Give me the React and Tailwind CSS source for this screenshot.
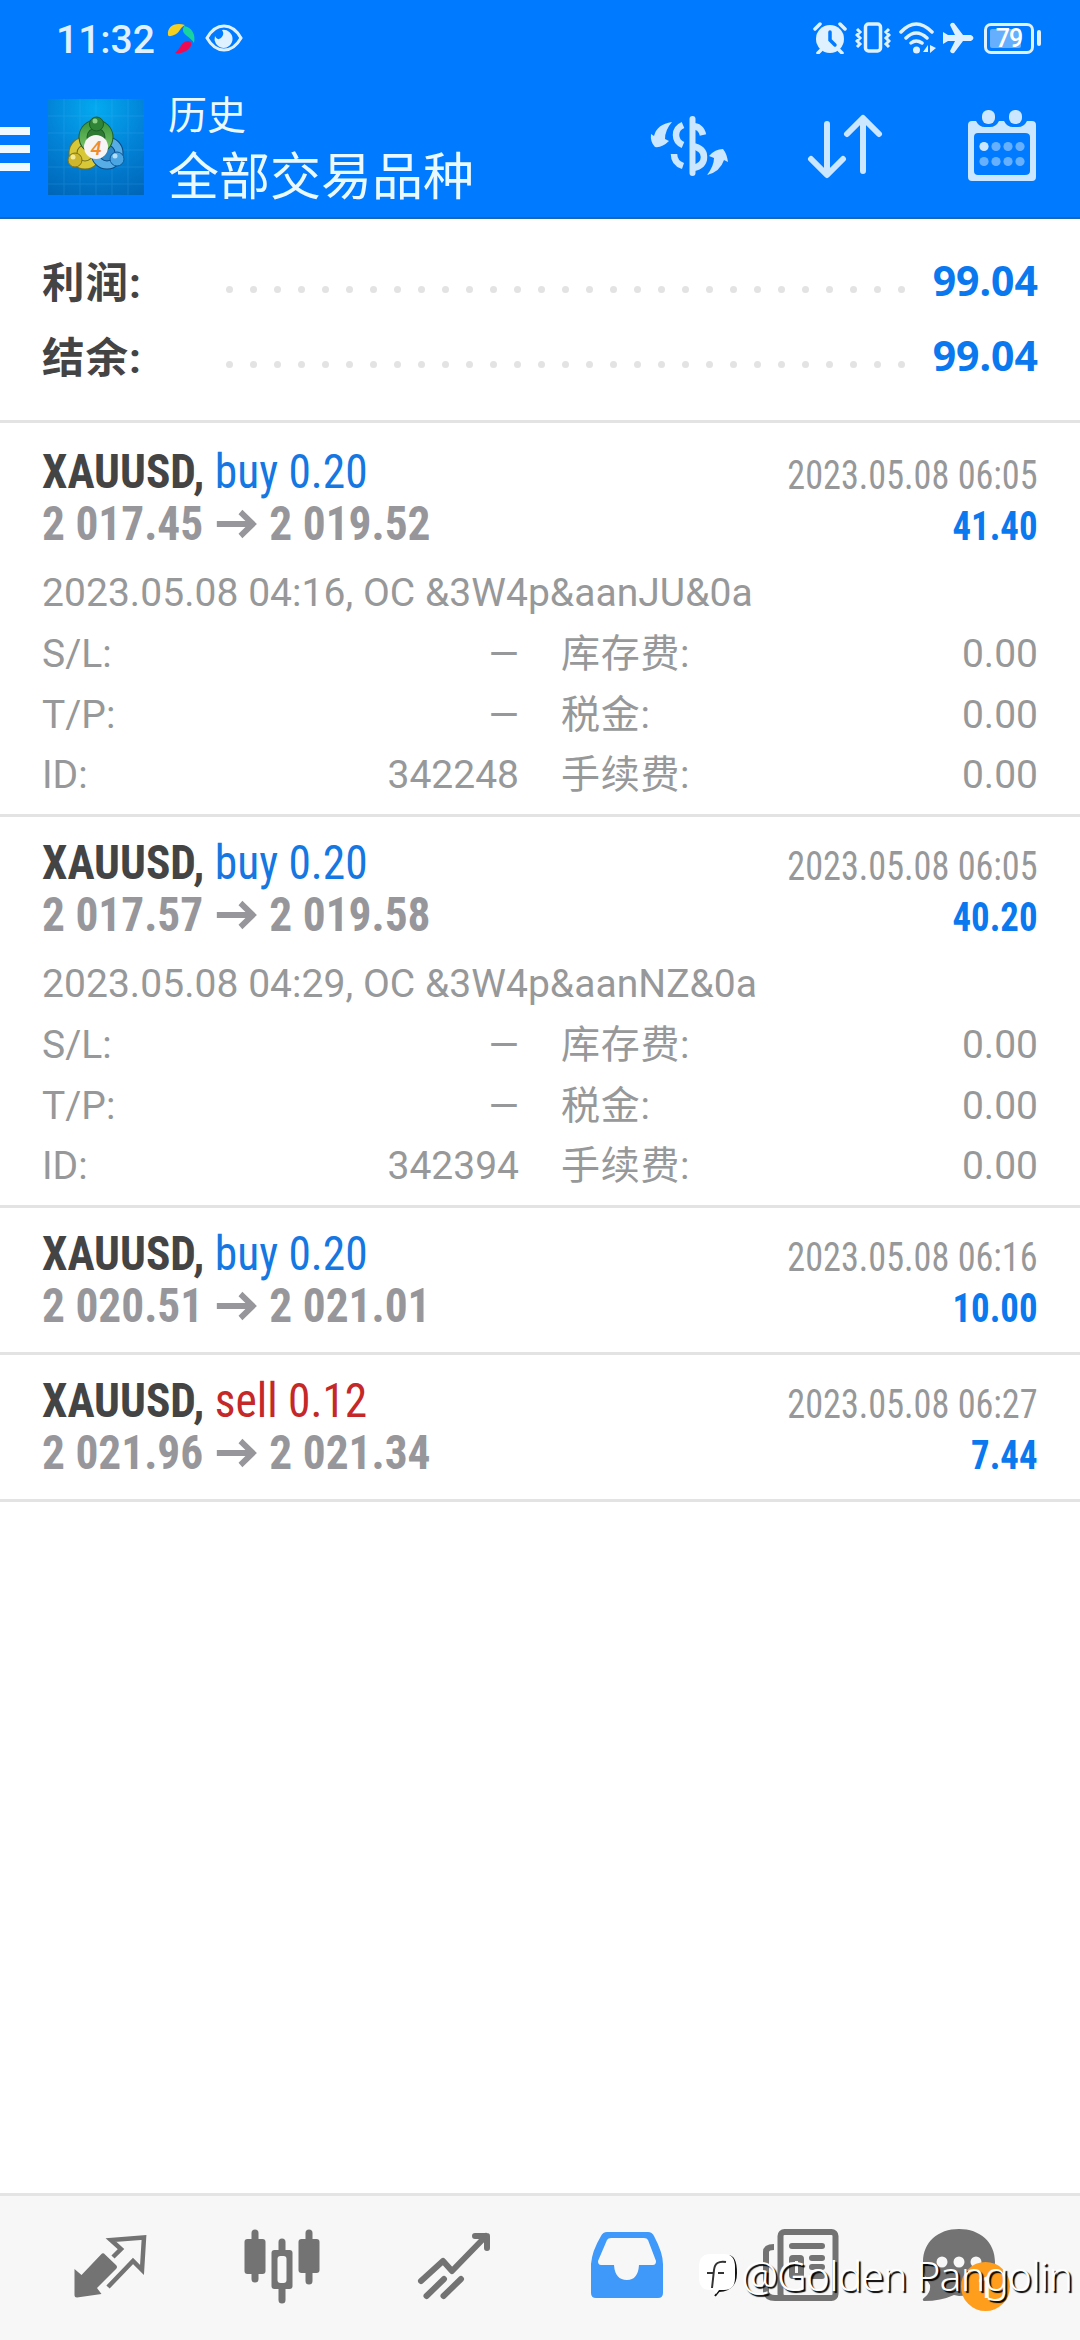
import clsx from 'clsx';

const SUMMARY = [
  { label: '利润:', value: '99.04' },
  { label: '结余:', value: '99.04' },
];

const DEALS = [
  {
    id: '342248',
    symbol: 'XAUUSD',
    side: 'buy',
    volume: '0.20',
    open: '2 017.45',
    close: '2 019.52',
    time: '2023.05.08 06:05',
    profit: '41.40',
    comment: '2023.05.08 04:16, OC &3W4p&aanJU&0a',
  },
  {
    id: '342394',
    symbol: 'XAUUSD',
    side: 'buy',
    volume: '0.20',
    open: '2 017.57',
    close: '2 019.58',
    time: '2023.05.08 06:05',
    profit: '40.20',
    comment: '2023.05.08 04:29, OC &3W4p&aanNZ&0a',
  },
  {
    symbol: 'XAUUSD',
    side: 'buy',
    volume: '0.20',
    open: '2 020.51',
    close: '2 021.01',
    time: '2023.05.08 06:16',
    profit: '10.00',
  },
  {
    symbol: 'XAUUSD',
    side: 'sell',
    volume: '0.12',
    open: '2 021.96',
    close: '2 021.34',
    time: '2023.05.08 06:27',
    profit: '7.44',
  },
];

function StatusBar() {
  return (
    <div className="flex h-[76px] items-center justify-between pl-[56px] pr-[39px] text-[#dff1ff]">
      <div className="flex items-center">
        <span className="w-[110px] pt-1 text-[39px] font-medium leading-none">11:32</span>
        <svg className="h-[32px] w-[30px]" viewBox="0 0 30 32">
          <path d="M2 13 C1 5 8 0 19 3 C14 5 13 12 8 13 C5 14 3 15 2 13Z" fill="#f5d020" />
          <path d="M18 4 C26 5 30 13 28 21 C25 15 16 13 17 7Z" fill="#17d3a0" />
          <path d="M9 31 C14 28 15 19 22 19 C28 20 25 26 20 29 C16 31 12 32 9 31Z" fill="#ee0a52" />
        </svg>
        <svg className="ml-[9px] h-[28px] w-[38px]" viewBox="0 0 38 28">
          <path d="M2 14 C11 -2 27 -2 36 14 C27 30 11 30 2 14Z" fill="none" stroke="currentColor" strokeWidth="3" />
          <path d="M17 6 A9 9 0 1 1 10 12 Q12 17 16 14 Q20 10 17 6Z" fill="currentColor" />
        </svg>
      </div>
      <div className="flex items-center">
        {/* alarm */}
        <svg className="h-[32px] w-[34px]" viewBox="0 0 34 32">
          <path d="M8 28 L5 31 M26 28 L29 31 M2 7 L7 2 M27 2 L32 7" stroke="currentColor" strokeWidth="3.5" strokeLinecap="round" />
          <circle cx="17" cy="17" r="14" fill="currentColor" />
          <path d="M17 10 V18 L22 23" fill="none" stroke="#007aff" strokeWidth="3.5" strokeLinecap="round" />
        </svg>
        {/* vibrate */}
        <svg className="ml-[8px] h-[32px] w-[36px]" viewBox="0 0 36 32">
          <rect x="10.500" y="2" width="15" height="27" rx="3" fill="none" stroke="currentColor" strokeWidth="3.5" />
          <path d="M2 7 L5 10 L2 13 L5 16 L2 19 L5 22 L2 25 M34 7 L31 10 L34 13 L31 16 L34 19 L31 22 L34 25" fill="none" stroke="currentColor" strokeWidth="3" />
        </svg>
        {/* wifi */}
        <svg className="ml-[8px] h-[32px] w-[37px]" viewBox="0 0 37 32">
          <path d="M2 10 Q17 -6 33 10 M7 16 Q17 6 28 16 M12 21 Q17 17 23 21" fill="none" stroke="currentColor" strokeWidth="3.5" strokeLinecap="round" />
          <circle cx="17.500" cy="28" r="3.500" fill="currentColor" />
          <path d="M29 23 V30 H24Z M31 23 L37 26 L31 31Z" fill="currentColor" />
        </svg>
        {/* airplane */}
        <svg className="ml-[6px] h-[32px] w-[32px]" viewBox="0 0 32 32">
          <path d="M1 10 L6 13 H13 L8 3 Q9 0 12 1 L21 13 H29 Q34 16 29 19 H21 L12 31 Q9 32 8 29 L13 19 H6 L1 22Z" fill="currentColor" />
        </svg>
        {/* battery */}
        <div className="ml-[10px] flex items-center gap-[3px]">
          <div className="relative flex h-[31px] w-[50px] items-center justify-center rounded-[7px] border-[3px] border-current">
            <div className="absolute left-[3px] top-[3px] h-[19px] w-[31px] rounded-[2px] bg-white/40" />
            <span className="relative text-[25px] font-medium leading-none tracking-[-1px] text-white">79</span>
          </div>
          <div className="h-[16px] w-[4px] rounded-full bg-current" />
        </div>
      </div>
    </div>
  );
}

function Logo() {
  return (
    <svg className="ml-[18px] h-24 w-24" viewBox="0 0 96 96">
      <defs>
        <radialGradient id="tile" cx="0.5" cy="0.1" r="1">
          <stop offset="0" stopColor="#04aaf0" />
          <stop offset="0.5" stopColor="#0284d8" />
          <stop offset="1" stopColor="#0066b8" />
        </radialGradient>
        <linearGradient id="green" x1="0" y1="0" x2="0" y2="1">
          <stop offset="0" stopColor="#3f9a3f" />
          <stop offset="1" stopColor="#7cc46a" />
        </linearGradient>
      </defs>
      <rect width="96" height="96" fill="url(#tile)" />
      <path
        d="M0 17H96M0 34H96M0 51H96M0 68H96M0 85H96M16 0V96M32 0V96M48 0V96M64 0V96M80 0V96"
        stroke="#5cc4f5"
        strokeWidth="1"
        opacity="0.18"
      />
      <circle cx="37" cy="54" r="12" fill="#d8c838" stroke="#75701c" strokeWidth="9" />
      <circle cx="37" cy="54" r="12" fill="none" stroke="#d8c838" strokeWidth="7" />
      <circle cx="59" cy="54" r="12" fill="#2d86c8" stroke="#0a4a86" strokeWidth="9" />
      <circle cx="59" cy="54" r="12" fill="none" stroke="#57aee6" strokeWidth="7" />
      <circle cx="48" cy="38" r="13" fill="#2f7a33" stroke="#1d5c2c" strokeWidth="9" />
      <circle cx="48" cy="38" r="13" fill="none" stroke="url(#green)" strokeWidth="7" />
      <circle cx="48.500" cy="25" r="7" fill="#2f8436" stroke="#1d5c2c" strokeWidth="1" />
      <circle cx="27" cy="61" r="7" fill="#cdb52c" stroke="#807518" strokeWidth="1" />
      <circle cx="69" cy="60" r="7" fill="#4ba5e2" stroke="#0f5a98" strokeWidth="1" />
      <circle cx="47" cy="22" r="2.500" fill="#8ccf88" />
      <circle cx="25" cy="58" r="2.500" fill="#f3ea98" />
      <circle cx="67" cy="57" r="2.500" fill="#b4defa" />
      <circle cx="48" cy="48" r="12" fill="#f6f4f4" />
      <text x="48" y="55.500" textAnchor="middle" fontSize="20" fontWeight="500" fontStyle="italic" fill="#f08c2c">
        4
      </text>
    </svg>
  );
}

function Header() {
  return (
    <header className="h-[219px] border-b-2 border-[#1766b8] bg-[#007aff]">
      <StatusBar />
      <div className="flex h-[141px] items-start">
        <button className="mt-[51px] flex w-[30px] flex-col gap-[10px]">
          <span className="h-2 w-full bg-[#eefaff]" />
          <span className="h-2 w-full bg-[#eefaff]" />
          <span className="h-2 w-full bg-[#eefaff]" />
        </button>
        <div className="mt-[23px]">
          <Logo />
        </div>
        <div className="ml-[24px] mt-[18px] text-[#e9f9ff]">
          <div className="text-[39px] leading-[44px]">历史</div>
          <div className="mt-[6px] text-[51px] leading-[68px]">全部交易品种</div>
        </div>
        <div className="ml-auto mr-[42px] mt-[30px] flex text-[#cbe6ff]">
          <svg className="h-[84px] w-[80px]" viewBox="0 0 80 84">
            <path d="M22 16 Q7 18 4 30 L1 28 Q0 36 5 41 Q12 42 19 35 L15 33 Q15 24 22 16Z" fill="currentColor" />
            <path d="M57 69 Q64 60 64 52 L59 50 Q65 43 73 43 Q77 48 78 56 L74 54 Q70 66 57 69Z" fill="currentColor" />
            <path d="M33 19 Q26 22 26 29 Q26 36 33 39 M24 48 Q24 57 33 60 M42 20 Q51 20 53 29 M42 40 Q54 42 54 51 Q54 60 43 62" fill="none" stroke="currentColor" strokeWidth="6.500" />
            <path d="M42.500 13 V67" stroke="currentColor" strokeWidth="6" strokeLinecap="round" />
          </svg>
          <svg className="ml-[77px] h-[84px] w-[76px]" viewBox="0 0 76 84" fill="none" stroke="currentColor" strokeWidth="6" strokeLinecap="round" strokeLinejoin="round">
            <path d="M20 18 V68 M4 53 L20 69 L36 53" />
            <path d="M56 65 V14 M40 28 L56 12 L72 28" />
          </svg>
          <svg className="ml-[83px] h-[84px] w-[72px]" viewBox="0 0 72 84">
            <path
              fillRule="evenodd"
              d="M6 15 H10 Q13 21 19 21 H24 Q30 21 33 15 H38 Q41 21 47 21 H52 Q58 21 61 15 H66 Q70 15 70 19 V71 Q70 75 66 75 H6 Q2 75 2 71 V19 Q2 15 6 15Z M12 27 Q8 27 8 31 V65 Q8 69 12 69 H59 Q64 69 64 65 V31 Q64 27 59 27Z"
              fill="currentColor"
            />
            <rect x="16" y="4" width="13" height="14" rx="6" fill="currentColor" />
            <rect x="43" y="4" width="13" height="14" rx="6" fill="currentColor" />
            <circle cx="18" cy="40.500" r="4.600" fill="currentColor" />
            <g fill="#66b0ff">
              <circle cx="30" cy="40.500" r="4.600" />
              <circle cx="42" cy="40.500" r="4.600" />
              <circle cx="54" cy="40.500" r="4.600" />
              <circle cx="18" cy="55.500" r="4.600" />
              <circle cx="30" cy="55.500" r="4.600" />
              <circle cx="42" cy="55.500" r="4.600" />
              <circle cx="54" cy="55.500" r="4.600" />
            </g>
          </svg>
        </div>
      </div>
    </header>
  );
}

function SummaryRow({ label, value }) {
  return (
    <div className="flex h-[75px] items-center">
      <span className="w-[184px] pt-[3px] text-[42.5px] font-bold tracking-[1px] text-[#444444]">{label}</span>
      <div className="mt-[14px] flex w-[679px] justify-between">
        {Array.from({ length: 29 }).map((_, i) => (
          <i key={i} className="size-[7px] rounded-full bg-[#e3e3e3]" />
        ))}
      </div>
      <span className="ml-auto pb-[3px] font-['Noto_Sans'] text-[41px] font-bold text-[#0a78ee]">{value}</span>
    </div>
  );
}

function DetailRow({ left, leftValue, right, rightValue }) {
  return (
    <div className="flex">
      <span>{left}</span>
      <span className="ml-auto">{leftValue}</span>
      <div className="ml-[42px] flex w-[477px] justify-between">
        <span className="tracking-[0.7px]">{right}</span>
        <span>{rightValue}</span>
      </div>
    </div>
  );
}

function Deal({ deal }) {
  return (
    <div
      className={clsx(
        'border-b-[3px] border-[#e3e3e3] px-[42px] pt-[20px]',
        deal.id ? 'pb-[8px]' : 'pb-[20px]',
      )}
    >
      <div className="flex h-[104px] justify-between font-['Roboto_Condensed']">
        <div className="origin-left scale-x-[0.945] text-[48px] font-bold leading-[52px]">
          <div className="text-[#444444]">
            {deal.symbol},{' '}
            <span className={clsx('font-normal', deal.side === 'buy' ? 'text-[#1477e2]' : 'text-[#c52828]')}>
              {deal.side} {deal.volume}
            </span>
          </div>
          <div className="flex items-center text-[#97979b]">
            <span>{deal.open}</span>
            <svg className="mx-[13px] h-[30px] w-[44px]" viewBox="0 0 44 30" fill="none" stroke="currentColor">
              <path d="M1 15 H38" strokeWidth="6" />
              <path d="M26 3 L39 15 L26 27" strokeWidth="6" />
            </svg>
            <span>{deal.close}</span>
          </div>
        </div>
        <div className="pt-[4px] text-right text-[40px] leading-[51px]">
          <div className="origin-right scale-x-[0.905] text-[#979899]">{deal.time}</div>
          <div className="origin-right scale-x-[0.92] font-bold text-[#0a78ee]">{deal.profit}</div>
        </div>
      </div>
      {deal.id && (
        <div className="mt-[13px] text-[39px] leading-[60.75px] text-[#979899]">
          <div className="tracking-[0.05px]">{deal.comment}</div>
          <DetailRow left="S/L:" leftValue="—" right="库存费:" rightValue="0.00" />
          <DetailRow left="T/P:" leftValue="—" right="税金:" rightValue="0.00" />
          <DetailRow left="ID:" leftValue={deal.id} right="手续费:" rightValue="0.00" />
        </div>
      )}
    </div>
  );
}

function NavIcon({ children, className }) {
  return (
    <svg
      className={clsx('h-[78px] w-[78px]', className)}
      viewBox="0 0 78 78"
      fill="none"
      stroke="currentColor"
      strokeLinecap="round"
      strokeLinejoin="round"
    >
      {children}
    </svg>
  );
}

function BottomNav() {
  return (
    <nav className="relative mt-auto h-[147px] border-t-[3px] border-[#e4e4e4] bg-[#f7f7f7] pt-[31px] pl-[71px]">
      <div className="flex gap-[94.700px] text-[#737373]">
        {/* quotes */}
        <NavIcon>
          <path d="M3.500 42 L10.500 48 L30 27.500 Q32 25 34 27.500 L45 38 Q47 40 45 42 L26 61 L30.500 67 L6 70.500 Q3.500 70.500 3.500 68Z" fill="currentColor" stroke="none" />
          <path d="M42 30 L50 22 L40 13 L73 10.500 L71 43 L62 34 L37 60" strokeWidth="4.500" strokeLinejoin="miter" strokeLinecap="butt" />
        </NavIcon>
        {/* chart */}
        <NavIcon>
          <path d="M11 6 V52 M38 15 V73 M65 6 V54" strokeWidth="7" />
          <g fill="currentColor" stroke="none">
            <rect x="0.500" y="12" width="21" height="35" rx="3" />
            <rect x="27.500" y="23" width="21" height="39" rx="3" />
            <rect x="54.500" y="12" width="21" height="34" rx="3" />
          </g>
          <rect x="33.500" y="29" width="9" height="27" rx="3" fill="#f7f7f7" stroke="none" />
        </NavIcon>
        {/* trade */}
        <NavIcon>
          <path d="M5 54 L27 34 L36 44 L70 9 M59 9 H71 V21" strokeWidth="6" />
          <path d="M10.500 69 L28 52 M27.500 69 L45 52" strokeWidth="6" />
        </NavIcon>
        {/* history */}
        <NavIcon className="text-[#3f99fb]">
          <path
            fillRule="evenodd"
            stroke="none"
            fill="currentColor"
            d="M18 5 H59 Q63 5 65 9 Q74 26 74 37 V66 Q74 71 69 71 H7 Q2 71 2 66 V37 Q3 24 12 9 Q14 5 18 5Z M22 11 Q19 11 18 13 L9 34 Q9 38 12 38 H25 Q26 53 38 53 Q49 53 50 38 H64 Q67 38 67 34 L59 13 Q58 11 55 11Z"
          />
        </NavIcon>
        {/* news */}
        <NavIcon>
          <rect x="18.500" y="5" width="55" height="66" rx="4" strokeWidth="6" />
          <path d="M12 20 Q4 20 4 25 V65 Q5 71 13 71 H69" strokeWidth="6" strokeLinecap="butt" />
          <path d="M30 19 H60 M50 31 H60 M50 40 H60 M50 49 H60" strokeWidth="6" />
          <rect x="30" y="31" width="9" height="18" rx="1" strokeWidth="6" />
        </NavIcon>
        {/* messages */}
        <div className="relative -ml-[13px]">
          <NavIcon>
            <path d="M38 2 C59 2 74 15 74 35 C74 55 58 69 38 69 L33 68 Q20 74 3 74 Q0 73 4 70 Q10 65 9 58 Q2 49 2 35 C2 15 17 2 38 2Z" fill="currentColor" stroke="none" />
            <g fill="#f7f7f7" stroke="none">
              <circle cx="21" cy="35" r="5.500" />
              <circle cx="38" cy="35" r="5.500" />
              <circle cx="55" cy="35" r="5.500" />
            </g>
          </NavIcon>
          <span className="absolute left-[40px] top-[35px] flex size-[49px] items-center justify-center rounded-full bg-[#ff9d1c] text-[32px] font-medium text-white">
            1
          </span>
        </div>
      </div>

      {/* author tag */}
      <div className="absolute right-[8px] top-[55px] flex items-center text-white">
        <svg className="mr-[3px] h-[44px] w-[40px]" viewBox="0 0 40 44">
          <path d="M17 43 L21 38 Q38 37 38 20 Q38 3 30 3" fill="none" stroke="#111111" strokeWidth="2" />
          <path d="M12 1 H26 Q37 1 37 14 V25 Q37 37 26 37 H21 L18 41 L15 37 H12 Q1 37 1 25 V14 Q1 1 12 1Z" fill="currentColor" />
          <path d="M28 9 Q17 7 16 17 L14 35 M9 20 H15 M20 20 H26" fill="none" stroke="#333333" strokeWidth="2" />
        </svg>
        <span className="font-['Noto_Sans'] text-[41px] font-light leading-[48px] tracking-[-0.9px] whitespace-nowrap [text-shadow:2px_2px_1px_#000]">
          @Golden Pangolin
        </span>
      </div>
    </nav>
  );
}

export default function App() {
  return (
    <div className="flex h-[2340px] w-[1080px] flex-col overflow-hidden bg-white font-[Roboto,'Noto_Sans_CJK_SC',sans-serif]">
      <Header />
      <section className="h-[204px] border-b-[3px] border-[#e3e3e3] px-[42px] pt-[26px]">
        {SUMMARY.map((row) => (
          <SummaryRow key={row.label} {...row} />
        ))}
      </section>
      <main className="pt-[3px]">
        {DEALS.map((deal, i) => (
          <Deal key={i} deal={deal} />
        ))}
      </main>
      <BottomNav />
    </div>
  );
}
